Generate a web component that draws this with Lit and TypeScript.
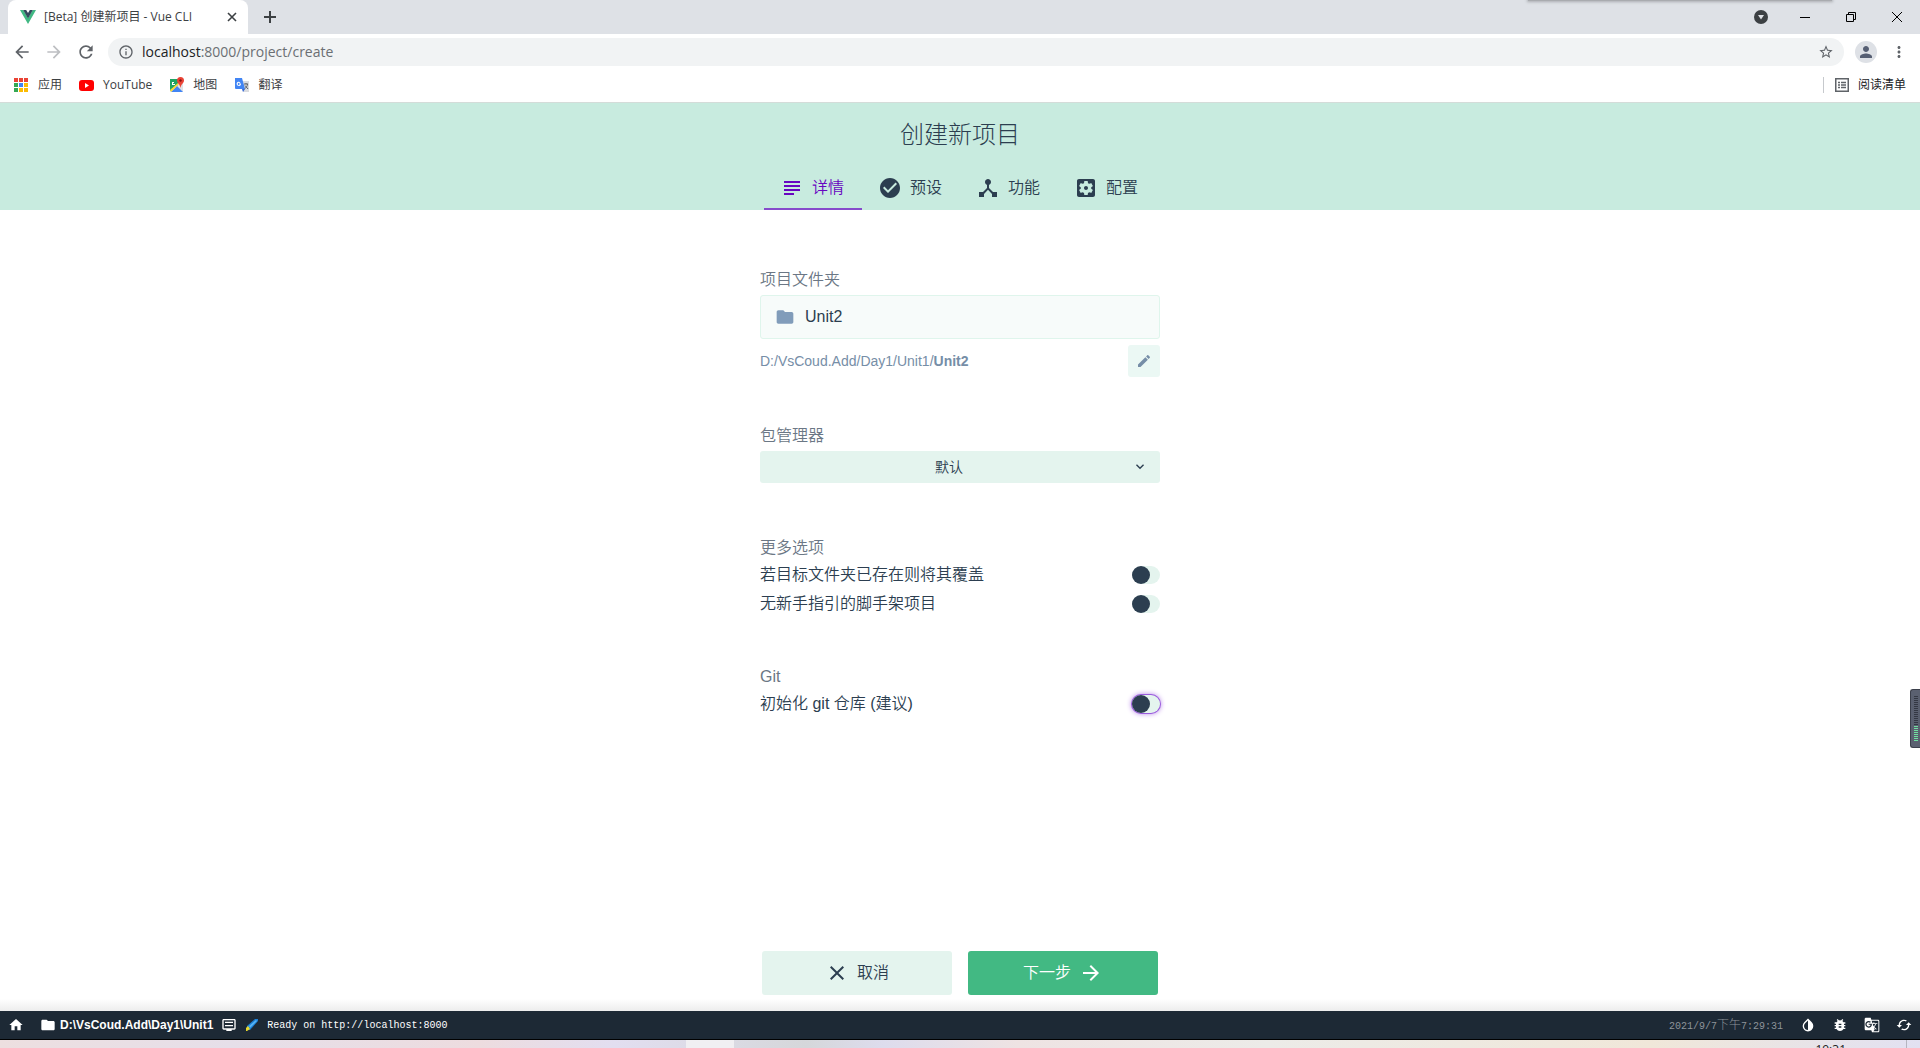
import { LitElement, html, css, svg } from "lit";
import { customElement, property, state } from "lit/decorators.js";
import { classMap } from "lit/directives/class-map.js";

const paths: Record<string, string> = {
  subject: "M14 17H4v2h10v-2zm6-8H4v2h16V9zM4 15h16v-2H4v2zM4 5v2h16V5H4z",
  check: "M12 2C6.48 2 2 6.48 2 12s4.48 10 10 10 10-4.48 10-10S17.52 2 12 2zm-2 15l-5-5 1.41-1.41L10 14.17l7.59-7.59L19 8l-9 9z",
  hub: "M17 16l-4-4V8.82C14.16 8.4 15 7.3 15 6c0-1.66-1.34-3-3-3S9 4.34 9 6c0 1.3.84 2.4 2 2.82V12l-4 4H3v5h5v-3.05l4-4.2 4 4.2V21h5v-5h-4z",
  config: "M12 10c-1.1 0-2 .9-2 2s.9 2 2 2 2-.9 2-2-.9-2-2-2zm7-7H5c-1.11 0-2 .9-2 2v14c0 1.1.89 2 2 2h14c1.11 0 2-.9 2-2V5c0-1.1-.89-2-2-2zm-1.75 9c0 .23-.02.46-.05.68l1.48 1.16c.13.11.17.3.08.45l-1.4 2.42c-.09.15-.27.21-.43.15l-1.74-.7c-.36.28-.76.51-1.18.69l-.26 1.85c-.03.17-.18.3-.35.3h-2.8c-.17 0-.32-.13-.35-.29l-.26-1.85c-.43-.18-.82-.41-1.18-.69l-1.74.7c-.16.06-.34 0-.43-.15l-1.4-2.42c-.09-.15-.05-.34.08-.45l1.48-1.16c-.03-.23-.05-.46-.05-.69 0-.23.02-.46.05-.68l-1.48-1.16c-.13-.11-.17-.3-.08-.45l1.4-2.42c.09-.15.27-.21.43-.15l1.74.7c.36-.28.76-.51 1.18-.69l.26-1.85c.03-.17.18-.3.35-.3h2.8c.17 0 .32.13.35.29l.26 1.85c.43.18.82.41 1.18.69l1.74-.7c.16-.06.34 0 .43.15l1.4 2.42c.09.15.05.34-.08.45l-1.48 1.16c.03.23.05.46.05.69z",
  folder: "M10 4H4c-1.1 0-2 .9-2 2v12c0 1.1.9 2 2 2h16c1.1 0 2-.9 2-2V8c0-1.1-.9-2-2-2h-8l-2-2z",
  edit: "M3 17.25V21h3.75L17.81 9.94l-3.75-3.75L3 17.25zM20.71 7.04c.39-.39.39-1.02 0-1.41l-2.34-2.34c-.39-.39-1.02-.39-1.41 0l-1.83 1.83 3.75 3.75 1.83-1.83z",
  down: "M7.41 7.84L12 12.42l4.59-4.58L18 9.25l-6 6-6-6z",
  close: "M19 6.41L17.59 5 12 10.59 6.41 5 5 6.41 10.59 12 5 17.59 6.41 19 12 13.41 17.59 19 19 17.59 13.41 12z",
  forward: "M12 4l-1.41 1.41L16.17 11H4v2h12.17l-5.58 5.59L12 20l8-8z",
  back: "M20 11H7.83l5.59-5.59L12 4l-8 8 8 8 1.41-1.41L7.83 13H20v-2z",
  reload: "M17.65 6.35C16.2 4.9 14.21 4 12 4c-4.42 0-7.99 3.58-7.99 8s3.57 8 7.99 8c3.73 0 6.84-2.55 7.73-6h-2.08c-.82 2.33-3.04 4-5.65 4-3.31 0-6-2.69-6-6s2.69-6 6-6c1.66 0 3.14.69 4.22 1.78L13 11h7V4l-2.35 2.35z",
  info: "M11 17h2v-6h-2v6zm1-15C6.48 2 2 6.48 2 12s4.48 10 10 10 10-4.48 10-10S17.52 2 12 2zm0 18c-4.41 0-8-3.59-8-8s3.59-8 8-8 8 3.59 8 8-3.59 8-8 8zM11 9h2V7h-2v2z",
  star: "M22 9.24l-7.19-.62L12 2 9.19 8.63 2 9.24l5.46 4.73L5.82 21 12 17.27 18.18 21l-1.63-7.03L22 9.24zM12 15.4l-3.76 2.27 1-4.28-3.32-2.88 4.38-.38L12 6.1l1.71 4.04 4.38.38-3.32 2.88 1 4.28L12 15.4z",
  person: "M12 12c2.21 0 4-1.79 4-4s-1.79-4-4-4-4 1.79-4 4 1.79 4 4 4zm0 2c-2.67 0-8 1.34-8 4v2h16v-2c0-2.66-5.33-4-8-4z",
  more: "M12 8c1.1 0 2-.9 2-2s-.9-2-2-2-2 .9-2 2 .9 2 2 2zm0 2c-1.1 0-2 .9-2 2s.9 2 2 2 2-.9 2-2-.9-2-2-2zm0 6c-1.1 0-2 .9-2 2s.9 2 2 2 2-.9 2-2-.9-2-2-2z",
  home: "M10 20v-6h4v6h5v-8h3L12 3 2 12h3v8z",
  invert: "M17.66 7.93L12 2.27 6.34 7.93c-3.12 3.12-3.12 8.19 0 11.31C7.9 20.8 9.95 21.58 12 21.58c2.05 0 4.1-.78 5.66-2.34 3.12-3.12 3.12-8.19 0-11.31zM12 19.59c-1.6 0-3.11-.62-4.24-1.76C6.62 16.69 6 15.19 6 13.59s.62-3.11 1.76-4.24L12 5.1v14.49z",
  bug: "M20 8h-2.81c-.45-.78-1.07-1.45-1.82-1.96L17 4.41 15.59 3l-2.17 2.17C12.96 5.06 12.49 5 12 5c-.49 0-.96.06-1.41.17L8.41 3 7 4.41l1.62 1.63C7.88 6.55 7.26 7.22 6.81 8H4v2h2.09c-.05.33-.09.66-.09 1v1H4v2h2v1c0 .34.04.67.09 1H4v2h2.81c1.04 1.79 2.97 3 5.19 3s4.15-1.21 5.19-3H20v-2h-2.09c.05-.33.09-.66.09-1v-1h2v-2h-2v-1c0-.34-.04-.67-.09-1H20V8zm-6 8h-4v-2h4v2zm0-4h-4v-2h4v2z",
  translate: "M21 4H11l-1-3H3c-1.1 0-2 .9-2 2v15c0 1.1.9 2 2 2h8l1 3h9c1.1 0 2-.9 2-2V6c0-1.1-.9-2-2-2zM7 16c-2.76 0-5-2.24-5-5s2.24-5 5-5c1.35 0 2.48.5 3.35 1.3L9.03 8.57c-.38-.36-1.04-.78-2.03-.78-1.74 0-3.15 1.44-3.15 3.21S5.26 14.21 7 14.21c2.01 0 2.84-1.44 2.92-2.41H7v-1.71h4.68c.07.31.12.61.12 1.02C11.8 13.97 9.89 16 7 16zm6.17-5.42h3.7c-.43 1.25-1.11 2.43-2.05 3.47-.31-.35-.6-.72-.86-1.1l-.79-2.37zm8.33 9.92c0 .55-.45 1-1 1H14l2-2.5-1.04-3.1 3.1 3.1.92-.92-3.3-3.25.02-.02c1.13-1.25 1.93-2.69 2.4-4.22H20v-1.3h-4.53V8h-1.29v1.29h-1.44L11.46 5.5h9.04c.55 0 1 .45 1 1v14z",
  sync: "M19 8l-4 4h3c0 3.31-2.69 6-6 6-1.01 0-1.97-.25-2.8-.7l-1.46 1.46C8.97 19.54 10.43 20 12 20c4.42 0 8-3.58 8-8h3l-4-4zM6 12c0-3.31 2.69-6 6-6 1.01 0 1.97.25 2.8.7l1.46-1.46C15.03 4.46 13.57 4 12 4c-4.42 0-8 3.58-8 8H1l4 4 4-4H6z",
  log: "M20 3H4C2.900 3 2 3.900 2 5v12c0 1.100.900 2 2 2h4v2h8v-2h4c1.100 0 2-.900 2-2V5c0-1.100-.900-2-2-2zm0 14H4V5h16v12zM6 7h12v2H6V7zm0 5h12v2H6v-2z",
};

const icon = (name: string, size: number, cls = "") =>
  html`<svg class=${cls} width=${size} height=${size} viewBox="0 0 24 24" fill="currentColor" aria-hidden="true">${svg`<path d=${paths[name]}></path>`}</svg>`;

const reset = css`
  * { box-sizing: border-box; }
  svg { display: block; flex: none; }
  button { font: inherit; color: inherit; background: none; border: 0; padding: 0; margin: 0; cursor: pointer; }
  a { color: inherit; text-decoration: none; }
`;

@customElement("browser-chrome")
class BrowserChrome extends LitElement {
  static styles = [reset, css`
    :host { display: block; flex: none; background: #fff; border-bottom: 1px solid #d4dcd9;
      font: 12px/16px "Open Sans", "Noto Sans CJK SC", sans-serif; color: #3c4043; }
    .strip { position: relative; display: flex; height: 34px; background: #dee1e6; padding-left: 8px; }
    .tab { display: flex; align-items: center; width: 240px; background: #fff; border-radius: 8px 8px 0 0; padding: 0 8px 0 12px; }
    .name { flex: 1; padding-left: 8px; white-space: nowrap; }
    .tab button, .plus { display: grid; place-items: center; width: 16px; }
    .plus { margin-left: 14px; }
    .win { display: flex; align-items: center; margin-left: auto; padding-right: 14px; color: #000; }
    .win button { display: grid; place-items: center; width: 46px; height: 28px; }
    .win .drop { width: 42px; height: 34px; }
    .win .last { width: 18px; margin-left: 14px; }
    .shade { position: absolute; top: 0; right: 88px; width: 304px; height: 1px; background: #a9abaf; box-shadow: 0 0 3px 1px #a9abaf; }
    .bar { display: flex; align-items: center; height: 36px; padding: 0 12px 0 12px; color: #5f6368; }
    .nav { display: flex; gap: 12px; padding-right: 12px; }
    .nav .off { color: #bdbfc2; }
    .omni { flex: 1; display: flex; align-items: center; gap: 8px; height: 28px; padding: 0 10px; border-radius: 14px; background: #f1f3f4; }
    .url { flex: 1; min-width: 0; display: flex; font-size: 14px; line-height: 20px; color: #6b6f73; }
    .host { color: #202124; }
    .avatar { display: grid; place-items: center; width: 22px; height: 22px; border-radius: 50%; background: #dee1e6; color: #565f73; margin-left: 11px; }
    .dots { margin-left: 13px; }
    .marks { display: flex; align-items: center; height: 32px; padding: 0 14px 3px 14px; }
    .marks a { display: flex; align-items: center; gap: 8px; margin-right: 17px; }
    .marks .list { margin: 0 0 0 auto; border-left: 1px solid #c6c9cd; padding-left: 11px; color: #202124; gap: 9px; }
  `];
  render() {
    const cells = ["#ea4335", "#ea4335", "#ea4335", "#34a853", "#4285f4", "#fbbc04", "#34a853", "#fbbc04", "#fbbc04"];
    return html`
      <div class="strip">
        <div class="tab">
          <svg width="16" height="16" viewBox="0 0 16 16"><path fill="#41b883" d="M0 1h3.300L8 9l4.700-8H16L8 15z"/><path fill="#35495e" d="M3.200 1h3L8 4l1.800-3h3L8 9.500z"/></svg>
          <span class="name">[Beta] 创建新项目 - Vue CLI</span>
          <button aria-label="关闭标签页"><svg width="10" height="10" viewBox="0 0 10 10" stroke="#3c4043" stroke-width="1.600"><path d="M1 1l8 8M9 1l-8 8"/></svg></button>
        </div>
        <button class="plus" aria-label="新标签页"><svg width="12" height="12" viewBox="0 0 12 12" stroke="#3c4043" stroke-width="2"><path d="M6 0v12M0 6h12"/></svg></button>
        <div class="win">
          <button class="drop" aria-label="搜索标签页"><svg width="14" height="14" viewBox="0 0 14 14"><circle cx="7" cy="7" r="7" fill="#3c4043"/><path d="M4 5h6L7 9.500z" fill="#dee1e6"/></svg></button>
          <button aria-label="最小化"><svg width="10" height="10" viewBox="0 0 10 10"><path d="M0 5h10v1H0z"/></svg></button>
          <button aria-label="还原"><svg width="10" height="10" viewBox="0 0 10 10" fill="none" stroke="#000"><path d="M.5 2.500h7v7h-7zM2.500 2.500v-2h7v7h-2"/></svg></button>
          <button class="last" aria-label="关闭"><svg width="10" height="10" viewBox="0 0 10 10" stroke="#000"><path d="M0 0l10 10M10 0L0 10"/></svg></button>
        </div>
        <div class="shade"></div>
      </div>
      <div class="bar">
        <div class="nav">
          <button aria-label="后退">${icon("back", 20)}</button>
          <button class="off" aria-label="前进">${icon("forward", 20)}</button>
          <button aria-label="重新加载">${icon("reload", 20)}</button>
        </div>
        <div class="omni">
          ${icon("info", 16)}
          <a class="url" href="#"><span class="host">localhost</span><span>:8000/project/create</span></a>
          <button aria-label="收藏">${icon("star", 16)}</button>
        </div>
        <button class="avatar" aria-label="用户">${icon("person", 18)}</button>
        <button class="dots" aria-label="菜单">${icon("more", 18)}</button>
      </div>
      <div class="marks">
        <a href="#"><svg width="16" height="14" viewBox="0 0 16 14">${cells.map((c, i) => svg`<rect x=${(i % 3) * 5} y=${Math.floor(i / 3) * 5} width="4" height="4" fill=${c}></rect>`)}</svg>应用</a>
        <a href="#"><svg width="16" height="16" viewBox="0 0 16 16"><rect y="3" width="15" height="11" rx="3" fill="#f00"/><path d="M6 6l4 2.500L6 11z" fill="#fff"/></svg>YouTube</a>
        <a href="#"><svg width="16" height="16" viewBox="0 0 16 16"><rect x="1" y="2" width="13" height="13" rx="1" fill="#dfe1e5"/><path d="M1 2h8v6l-8 6z" fill="#1fa463"/><path d="M2 15l6-6 6 6z" fill="#4285f4"/><path d="M1 13l8-7 1 1-8 8z" fill="#fdd835"/><path d="M3 5h2v1H4v1h2v1H3z" fill="#fff"/><path d="M11.500 0A3.500 3.500 0 0 0 8 3.500C8 6 11 7 11.500 11 12 7 15 6 15 3.500A3.500 3.500 0 0 0 11.500 0z" fill="#ea4335"/><circle cx="11.500" cy="3.500" r="1.200" fill="#811"/></svg>地图</a>
        <a href="#"><svg width="16" height="16" viewBox="0 0 16 16"><path d="M7 4h8v11H9z" fill="#dadce0"/><path d="M1 1h7l3 11H2a1 1 0 0 1-1-1z" fill="#4285f4"/><path d="M8 12h3l-2 3z" fill="#3367d6"/><path d="M7 6.500H5v1h1a1.200 1.200 0 1 1-.3-1.500l.7-.7A2.200 2.200 0 1 0 7 6.500z" fill="#fff"/><path d="M10 7h4M12 6v1M13.500 7c0 2-1.500 4-3 5M11 8.500l3 3.500" stroke="#5f6368" fill="none"/></svg>翻译</a>
        <a class="list" href="#"><svg width="14" height="14" viewBox="0 0 14 14" fill="none" stroke="#5f6368"><rect x=".75" y=".75" width="12.500" height="12.500" stroke-width="1.500"/><path d="M3 4.500h2M6 4.500h5M3 7h2M6 7h5M3 9.500h2M6 9.500h5" stroke-width="1.300"/></svg>阅读清单</a>
      </div>`;
  }
}

@customElement("toggle-row")
class ToggleRow extends LitElement {
  static styles = [reset, css`
    :host { display: block; }
    label { display: flex; align-items: center; justify-content: space-between; height: 29px; cursor: pointer; }
    .switch { appearance: none; margin: 0; width: 28px; height: 18px; border-radius: 9px; background: #e4f4ee; outline: 0; }
    .switch::before { content: ""; display: block; width: 18px; height: 18px; border-radius: 50%; background: #2c3e50; }
    .switch:checked::before { margin-left: 10px; }
    .ring { box-shadow: 0 0 0 1px #9a5bdd, 0 0 5px 1px #b98be8; }
  `];
  @property() text = "";
  @property({ type: Boolean }) ring = false;
  render() {
    return html`<label><span>${this.text}</span><input type="checkbox" role="switch" class=${classMap({ switch: true, ring: this.ring })} /></label>`;
  }
}

@customElement("app-root")
class AppRoot extends LitElement {
  static styles = [reset, css`
    :host { display: flex; flex-direction: column; min-height: 100vh; position: relative; overflow: hidden; background: #fff; color: #2c3e50;
      font: 350 16px/24px "Liberation Sans", "Noto Sans CJK SC", sans-serif; }
    header { flex: none; background: #c8ebdf; text-align: center; }
    h1 { margin: 0; font-size: 24px; font-weight: 300; line-height: 64px; }
    .tabs { display: flex; justify-content: center; }
    .tab { display: flex; align-items: center; justify-content: center; gap: 8px; width: 98px; height: 43px; padding-right: 2px; border-bottom: 2px solid transparent; }
    .active { color: #6806c1; border-color: #864bcb; }
    main { flex: 1; width: 400px; max-width: 100%; margin: 0 auto; padding-top: 57px; }
    .group { margin-bottom: 46px; }
    .title { display: block; color: #6b7785; line-height: 25px; }
    .field { display: flex; align-items: center; gap: 10px; height: 44px; margin-top: 3px; padding: 0 14px; border: 1px solid #dff5ec; border-radius: 3px; background: #f7fbfa; color: #819cba; }
    .field input { flex: 1; min-width: 0; border: 0; outline: 0; padding: 0; background: none; font: inherit; color: #2c3e50; }
    .path { display: flex; align-items: center; justify-content: space-between; margin-top: 6px; font-size: 14px; color: #768ea7; }
    .path b { font-weight: 700; }
    .edit { display: grid; place-items: center; width: 32px; height: 32px; border-radius: 3px; background: #ebf8f4; }
    .pick { position: relative; margin-top: 3px; padding-bottom: 6px; }
    .pick select { appearance: none; display: block; width: 100%; height: 32px; border: 0; border-radius: 3px; padding: 0 30px 0 8px; background: #e4f4ee; font: inherit; font-size: 14px; color: #2c3e50; text-align: center; text-align-last: center; }
    .pick svg { position: absolute; right: 12px; top: 8px; pointer-events: none; }
    .actions { flex: none; display: flex; justify-content: center; gap: 16px; padding: 16px; background: linear-gradient(#fff 84%, #ededed); }
    .btn { display: flex; align-items: center; justify-content: center; gap: 8px; width: 190px; height: 44px; border-radius: 3px; background: #e4f4ee; }
    .next { background: #42b983; color: #fff; }
    footer { flex: none; display: flex; align-items: center; height: 29px; padding: 0 8px; background: #1d2935; border-bottom: 1px solid #000; color: #fff; font-size: 12px; line-height: 16px; }
    .cwd { display: flex; align-items: center; gap: 4px; margin-left: 16px; font-weight: 700; }
    .logs { display: flex; align-items: center; gap: 8px; margin-left: 8px; }
    .mono { font: 10px/16px "Liberation Mono", "Noto Sans CJK SC", monospace; padding-top: 2px; }
    .time { margin-left: auto; color: #8e949a; }
    .han { font-size: 12px; font-weight: 300; }
    .tools { display: flex; gap: 16px; margin-left: 17px; }
    .desk { flex: none; display: flex; justify-content: flex-end; height: 8px; overflow: hidden; color: #222;
      background: linear-gradient(90deg, #eddfe0, #e6dfe9 12%, #eddcdf 25%, #e2def0 32%, #d5d7da 42%, #dddced 46%, #eee3e3 53%, #ecebe8 66%, #f0e7d9 86%, #e2e1f2); }
    .slot { width: 48px; background: #f0eff2; margin-right: auto; margin-left: 686px; }
    .clock { font: 12px/16px "Open Sans", sans-serif; padding: 2px 40px 0 0; }
    .peek { width: 34px; }
    .peek::before { content: ""; display: block; width: 1px; height: 8px; margin-left: 20px; background: #b5b5bf; }
    .meter { position: absolute; right: 0; top: 689px; width: 10px; height: 59px; border: 1px solid #3b3f4b; border-right: 0; border-radius: 3px 0 0 3px; background: #5a6070; padding: 6px 2px 0 3px; }
    .tick { height: 1px; margin-bottom: 1px; background: #343844; }
    .lit { background: #6fe0a0; }
  `];
  @state() private current = 0;
  render() {
    const tabs = [["subject", "详情"], ["check", "预设"], ["hub", "功能"], ["config", "配置"]];
    return html`
      <browser-chrome></browser-chrome>
      <header>
        <h1>创建新项目</h1>
        <nav class="tabs">${tabs.map(([i, t], n) => html`<button class=${classMap({ tab: true, active: n === this.current })} @click=${() => (this.current = n)}>${icon(i, 24)}${t}</button>`)}</nav>
      </header>
      <main>
        <section class="group">
          <label class="title" for="folder">项目文件夹</label>
          <div class="field">${icon("folder", 20)}<input id="folder" .value=${"Unit2"} /></div>
          <div class="path"><span>D:/VsCoud.Add/Day1/Unit1/<b>Unit2</b></span><button class="edit" aria-label="编辑路径">${icon("edit", 16)}</button></div>
        </section>
        <section class="group">
          <label class="title" for="manager">包管理器</label>
          <div class="pick"><select id="manager"><option>默认</option></select>${icon("down", 16)}</div>
        </section>
        <section class="group">
          <span class="title">更多选项</span>
          <toggle-row text="若目标文件夹已存在则将其覆盖"></toggle-row>
          <toggle-row text="无新手指引的脚手架项目"></toggle-row>
        </section>
        <section class="group">
          <span class="title">Git</span>
          <toggle-row text="初始化 git 仓库 (建议)" ring></toggle-row>
        </section>
      </main>
      <div class="actions">
        <button class="btn">${icon("close", 24)}取消</button>
        <button class="btn next">下一步${icon("forward", 24)}</button>
      </div>
      <footer>
        <a href="#" aria-label="主页">${icon("home", 16)}</a>
        <a class="cwd" href="#">${icon("folder", 16)}D:\\VsCoud.Add\\Day1\\Unit1</a>
        <a class="logs" href="#">${icon("log", 16)}
          <svg width="14" height="14" viewBox="0 0 14 14"><path d="M2 8l8-7 3 0v2L5 12H2z" fill="#1b7fd6"/><path d="M4 8l7-6 1 1-7 7z" fill="#56b4f5"/><path d="M1 10l2-2 2 3-3 2H1z" fill="#e8d92c"/></svg>
          <span class="mono">Ready on http://localhost:8000</span></a>
        <time class="mono time">2021/9/7<span class="han">下午</span>7:29:31</time>
        <div class="tools">${["invert", "bug", "translate", "sync"].map((n) => html`<button aria-label=${n}>${icon(n, 16)}</button>`)}</div>
      </footer>
      <div class="desk"><span class="slot"></span><span class="clock">19:31</span><span class="peek"></span></div>
      <div class="meter">${Array.from({ length: 23 }, (_, i) => html`<div class=${classMap({ tick: true, lit: i > 14 })}></div>`)}</div>`;
  }
}
